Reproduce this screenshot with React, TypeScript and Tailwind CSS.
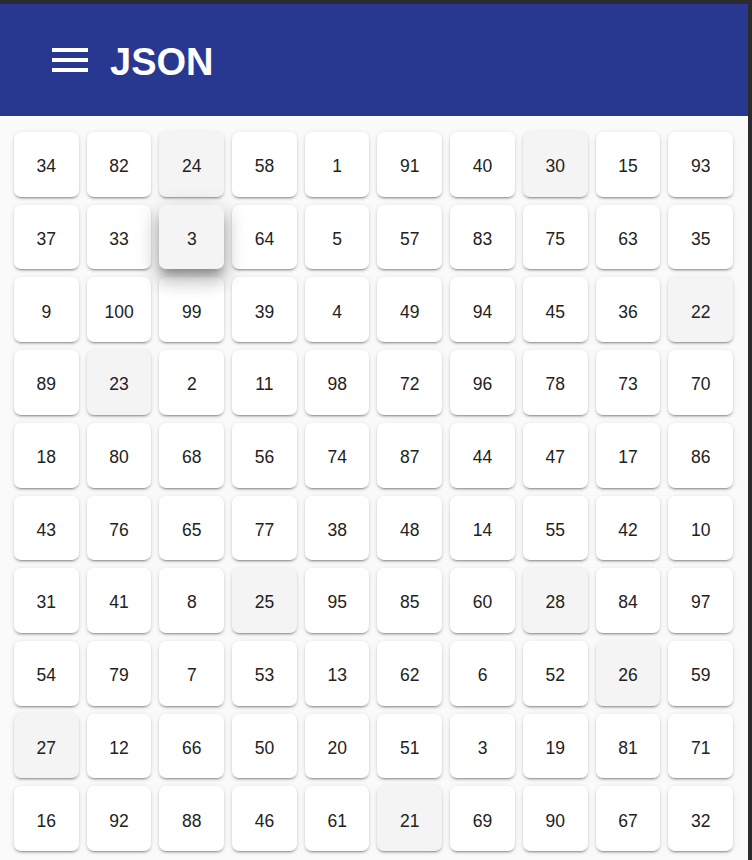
const rows: number[][] = [
  [34, 82, 24, 58, 1, 91, 40, 30, 15, 93],
  [37, 33, 3, 64, 5, 57, 83, 75, 63, 35],
  [9, 100, 99, 39, 4, 49, 94, 45, 36, 22],
  [89, 23, 2, 11, 98, 72, 96, 78, 73, 70],
  [18, 80, 68, 56, 74, 87, 44, 47, 17, 86],
  [43, 76, 65, 77, 38, 48, 14, 55, 42, 10],
  [31, 41, 8, 25, 95, 85, 60, 28, 84, 97],
  [54, 79, 7, 53, 13, 62, 6, 52, 26, 59],
  [27, 12, 66, 50, 20, 51, 3, 19, 81, 71],
  [16, 92, 88, 46, 61, 21, 69, 90, 67, 32],
]

// the card that is being dragged
const LIFTED = { row: 1, col: 2 }

function Tile({ value, lifted }: { value: number; lifted: boolean }) {
  const grey = lifted || (value >= 21 && value <= 30)
  return (
    <div
      className={
        'flex aspect-square items-center justify-center rounded-[7px] pt-1 text-[17.5px] text-[#222] ' +
        (grey ? 'bg-[#f4f4f4] ' : 'bg-white ') +
        (lifted
          ? 'relative z-10 shadow-[0_7px_8px_-3px_rgba(0,0,0,0.3),0_12px_17px_2px_rgba(0,0,0,0.16),0_5px_22px_4px_rgba(0,0,0,0.12)]'
          : 'shadow-[0_3px_1px_-2px_rgba(0,0,0,0.2),0_2px_2px_0_rgba(0,0,0,0.14),0_1px_5px_0_rgba(0,0,0,0.12)]')
      }
    >
      {value}
    </div>
  )
}

export default function App() {
  return (
    <div className="flex h-[860px] w-[752px] overflow-hidden border-t-4 border-r-4 border-[#2b2b2b] bg-[#fafafa] font-['Liberation_Sans',Arial,sans-serif]">
      <div className="flex min-w-0 flex-1 flex-col">
        <header className="flex h-[112px] shrink-0 items-center bg-[#283891] pl-[52px]">
          <button className="flex h-9 w-9 flex-col justify-center gap-[6px]" aria-label="menu">
            <span className="block h-[4px] w-9 bg-white" />
            <span className="block h-[4px] w-9 bg-white" />
            <span className="block h-[4px] w-9 bg-white" />
          </button>
          <h1 className="ml-[22px] mt-[3px] text-[38px] font-bold leading-none text-white">JSON</h1>
        </header>
        <main className="grid grid-cols-10 gap-2 pl-[14px] pr-[15px] pt-4">
          {rows.map((r, i) =>
            r.map((v, j) => (
              <Tile key={i + '-' + j} value={v} lifted={i === LIFTED.row && j === LIFTED.col} />
            )),
          )}
        </main>
      </div>
    </div>
  )
}
